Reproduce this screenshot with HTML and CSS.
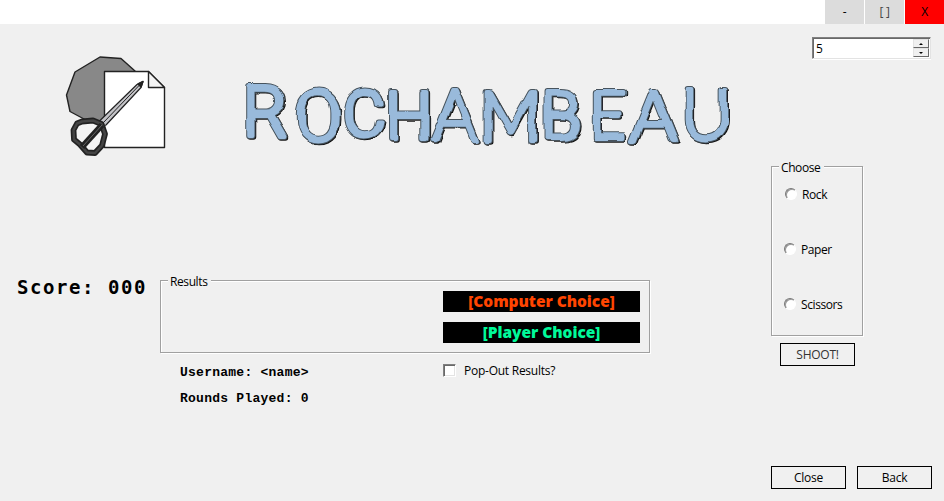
FILE: index.html
```html
<!DOCTYPE html>
<html lang="en">
<head>
<meta charset="utf-8">
<title>Rochambeau</title>
<link rel="stylesheet" href="styles.css">
</head>
<body>
<header class="titlebar">
  <button class="winbtn">-</button>
  <button class="winbtn maximize">[ ]</button>
  <button class="winbtn exit">X</button>
</header>
<main class="window">
  <section class="left">
    <div class="brand">
      <svg class="emblem" width="104" height="106" viewBox="64 53 104 106" stroke="#222" stroke-width="1.4" stroke-linejoin="round">
        <path fill="#888" d="M100 57L121 58.500 135 71 150 100 105 140 84 119 70 111.500 66.500 95 75 72Z"/>
        <path fill="#fff" d="M104.500 71.500H148.500L164.500 87.500V147.500H104.500Z"/>
        <path fill="#f4f4f4" d="M148.500 71.500V87.500H164.500Z"/>
        <path fill="#c4c4c8" stroke-width="1.200" d="M99.500 121L137 84.500 143 81.500 141 87.500 106 125 103 126Z"/>
        <path fill="none" stroke-width="1" d="M103 123L140 84.500"/>
        <path fill="#222" d="M138 84L143 81.500 141 87Z"/>
        <path fill="#f4f4f4" stroke="none" d="M83 121L94 120.500 103 124 106 134 103 146 96 153 86 152.500 80 146 74 140 73 129 77 123Z"/>
        <path fill="none" stroke="#222" stroke-width="5.800" d="M82 121.500L93 120.500 101.500 124 105 134 102 145.500 95 153 87 152.500 80 144.500 74 139.500 73.500 130 77 123.500Z"/>
        <path fill="none" stroke="#444" stroke-width="2.500" d="M82 121.500L93 120.500 101.500 124 105 134 102 145.500 95 153 87 152.500 80 144.500 74 139.500 73.500 130 77 123.500Z"/>
        <path fill="none" stroke="#222" stroke-width="6" d="M82 147L102 125"/>
        <path fill="none" stroke="#666" stroke-width="1" d="M83 146L102 125"/>
      </svg>
      <svg class="wordmark" width="520" height="90" viewBox="230 66 520 90">
        <defs>
          <filter id="sketch" x="-5%" y="-15%" width="110%" height="130%">
            <feTurbulence type="fractalNoise" baseFrequency="0.045" numOctaves="1" seed="8" result="noise"/>
            <feDisplacementMap in="SourceGraphic" in2="noise" scale="7" xChannelSelector="R" yChannelSelector="G"/>
          </filter>
        </defs>
        <g filter="url(#sketch)">
          <text class="word shade" x="244 295.500 344 386 433 480.500 541.500 590 632 682" y="136.500 141.500 136.500 140.500 141 141.500 140 138.500 142 140"><tspan class="narrow">RO<tspan class="small">C</tspan><tspan class="thin">H</tspan></tspan>A<tspan class="mid">M</tspan><tspan class="narrow thin">B</tspan><tspan class="small">E</tspan>AU</text>
          <text class="word outline" aria-hidden="true" x="243 294.500 343 385 432 479.500 540.500 589 631 681" y="135.500 140.500 135.500 139.500 140 140.500 139 137.500 141 139"><tspan class="narrow">RO<tspan class="small">C</tspan><tspan class="thin">H</tspan></tspan>A<tspan class="mid">M</tspan><tspan class="narrow thin">B</tspan><tspan class="small">E</tspan>AU</text>
          <text class="word face" aria-hidden="true" x="243 294.500 343 385 432 479.500 540.500 589 631 681" y="135.500 140.500 135.500 139.500 140 140.500 139 137.500 141 139"><tspan class="narrow">RO<tspan class="small">C</tspan><tspan class="thin">H</tspan></tspan>A<tspan class="mid">M</tspan><tspan class="narrow thin">B</tspan><tspan class="small">E</tspan>AU</text>
        </g>
      </svg>
    </div>
    <div class="scoreboard">
      <div class="score">Score: 000</div>
      <div class="outcome">
        <fieldset class="results">
          <legend>Results</legend>
          <div class="choice computer">[Computer Choice]</div>
          <div class="choice player">[Player Choice]</div>
        </fieldset>
        <div class="details">
          <div class="stats"><div>Username: &lt;name&gt;</div><div>Rounds Played: 0</div></div>
          <label class="popout"><span class="check"></span>Pop-Out Results?</label>
        </div>
      </div>
    </div>
  </section>
  <aside class="right">
    <div class="spinner"><span>5</span>
      <div class="steps"><i class="step up"></i><i class="step down"></i></div>
    </div>
    <fieldset class="choose">
      <legend>Choose</legend>
      <label class="option rock"><span class="radio"></span>Rock</label>
      <label class="option"><span class="radio"></span>Paper</label>
      <label class="option"><span class="radio"></span>Scissors</label>
    </fieldset>
    <button class="btn shoot">SHOOT!</button>
    <div class="actions"><button class="btn">Close</button><button class="btn">Back</button></div>
  </aside>
</main>
</body>
</html>
```
FILE: styles.css
```css
* { box-sizing: border-box; }
body {
  margin: 0;
  width: 944px;
  height: 501px;
  overflow: hidden;
  background: #f0f0f0;
  color: #000;
  font: 12px/16px "Open Sans", "Noto Sans", sans-serif;
  letter-spacing: -0.25px;
}
button { font: inherit; letter-spacing: inherit; color: inherit; padding: 0; }
.titlebar { display: flex; justify-content: flex-end; gap: 1px; height: 24px; background: #fff; }
.winbtn { width: 39px; height: 24px; border: 0; background: #dcdcdc; }
.maximize { color: #444; }
.exit { background: #f00; }
.window { display: flex; height: 477px; }
.left { width: 771px; }
.brand { display: flex; height: 256px; padding: 29px 0 0 64px; }
.emblem { flex: none; }
.wordmark { flex: none; margin: 13px 0 0 62px; }
.word { font: 300 70px Lato, sans-serif; letter-spacing: 0; stroke-linejoin: round; }
.narrow { font-family: Roboto, sans-serif; }
.small { font-size: 65px; }
.mid { font-size: 68px; }
.thin { font-size: 67px; }
.shade { fill: #111; stroke: #111; stroke-width: 5.6px; }
.outline { fill: #456; stroke: #46535d; stroke-width: 6px; }
.face { fill: #99badb; stroke: #99badb; stroke-width: 4px; }
.scoreboard { display: flex; }
.score {
  width: 160px;
  height: 28px;
  margin-top: -7px;
  padding-left: 17px;
  font: bold 19px/28px "DejaVu Sans Mono", monospace;
  letter-spacing: 1.55px;
  white-space: nowrap;
}
fieldset {
  position: relative;
  margin: 0;
  min-width: 0;
  border: 1px solid #a0a0a0;
  box-shadow: 1px 1px #fff, inset 1px 1px #fff;
}
legend {
  position: absolute;
  top: -7px;
  left: 7px;
  height: 16px;
  padding: 0 4px 0 2px;
  background: #f0f0f0;
  letter-spacing: -0.4px;
}
.results { width: 490px; height: 73px; padding: 10px 9px 0 282px; }
.choice {
  height: 21px;
  margin-bottom: 10px;
  background: #000;
  text-align: center;
  font: 800 15.5px/21px "Open Sans", sans-serif;
  letter-spacing: -0.05px;
}
.computer { color: #ff4500; }
.player { color: #00fa9a; }
.details { display: flex; }
.stats {
  width: 283px;
  padding: 7px 0 0 20px;
  font: bold 13px/26px "Liberation Mono", monospace;
  letter-spacing: 0.25px;
}
.popout { display: flex; height: 16px; margin-top: 10px; }
.check {
  width: 13px;
  height: 13px;
  margin: 1px 8px 0 0;
  background: #fff;
  border: 1px solid;
  border-color: #808080 #fff #fff #808080;
  box-shadow: inset 1px 1px #696969, inset -1px -1px #e3e3e3;
}
.right { width: 161px; display: flex; flex-direction: column; padding-top: 13px; }
.spinner {
  display: flex;
  justify-content: space-between;
  width: 119px;
  height: 22px;
  margin-left: 41px;
  padding: 1px 0 0 3px;
  line-height: 20px;
  background: #fff;
  border: 1px solid;
  border-color: #808080 #e3e3e3 #e3e3e3 #808080;
  box-shadow: inset 1px 1px #696969, 0 1px #fff;
}
.steps { display: flex; flex-direction: column; width: 16px; margin-right: 1px; }
.step {
  display: flex;
  justify-content: center;
  align-items: center;
  height: 9px;
  background: #f0f0f0;
  border: 1px solid;
  border-color: #e3e3e3 #696969 #696969 #e3e3e3;
}
.step::before { content: ""; border: solid transparent; border-width: 0 2px 2px; border-bottom-color: #000; }
.down::before { border-width: 2px 2px 0; border-top-color: #000; }
.choose { width: 92px; height: 170px; margin-top: 107px; padding: 20px 0 0 12px; }
.option { display: flex; height: 16px; margin-bottom: 39px; letter-spacing: -0.4px; }
.rock { padding-left: 1px; }
.radio {
  width: 12px;
  height: 12px;
  margin: 1px 5px 0 0;
  border-radius: 50%;
  background: #fff;
  border: 1px solid;
  border-color: #777 #fff #fff #777;
  box-shadow: inset 1px 1px #999;
}
.btn { width: 75px; height: 23px; background: #f0f0f0; border: 1px solid #000; }
.shoot { margin: 7px 0 0 9px; color: #333; }
.actions { display: flex; gap: 11px; margin-top: 100px; }
```
